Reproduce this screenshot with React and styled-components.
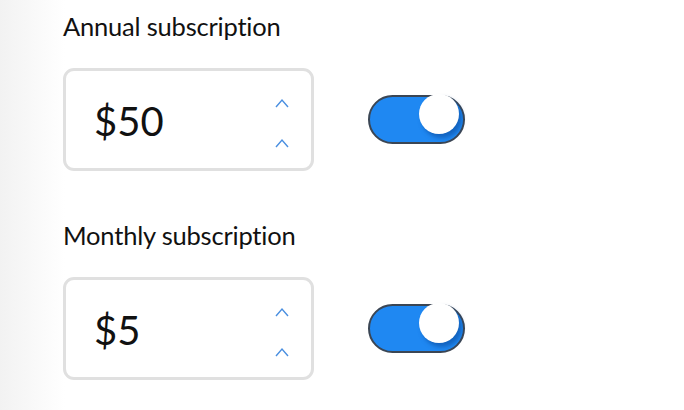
import styled, { createGlobalStyle } from 'styled-components';

const GlobalStyle = createGlobalStyle`
  html, body {
    margin: 0;
    padding: 0;
    background: #ffffff;
    font-family: Lato, "Open Sans", sans-serif;
  }
`;

const Page = styled.div`
  width: 684px;
  height: 410px;
  overflow: hidden;
  background: linear-gradient(to right, #f2f2f2 0px, #f6f6f6 20px, #fbfbfb 45px, #ffffff 65px);
  padding: 11px 0 0 63px;
  box-sizing: border-box;
  display: flex;
  flex-direction: column;
  gap: 49px;
`;

const Section = styled.div`
  display: flex;
  flex-direction: column;
  gap: 27px;
`;

const Label = styled.div`
  font-size: 25.5px;
  line-height: 30px;
  color: #111;
  letter-spacing: -0.2px;
`;

const Row = styled.div`
  display: flex;
  align-items: center;
  gap: 54px;
`;

const Field = styled.div`
  flex: none;
  width: 251px;
  height: 103px;
  box-sizing: border-box;
  border: 3px solid #e0e0e0;
  border-radius: 11px;
  background: #fff;
  display: flex;
  align-items: center;
  justify-content: space-between;
  padding: 0 22px 0 28px;
`;

const Value = styled.div`
  font-size: 40px;
  color: #111;
  padding-top: 2px;
`;

const Spinner = styled.div`
  display: flex;
  flex-direction: column;
  gap: 30px;
  padding-top: 6px;
`;

const Toggle = styled.div`
  flex: none;
  position: relative;
  width: 97px;
  height: 49px;
  box-sizing: border-box;
  border: 2px solid #3b4654;
  border-radius: 25px;
  background: #1f88f2;
`;

const Knob = styled.div`
  position: absolute;
  right: 4px;
  top: -3px;
  width: 40px;
  height: 40px;
  border-radius: 50%;
  background: #fff;
  box-shadow: 3px 4px 4px rgba(10, 70, 150, 0.55);
`;

function Chevron() {
  return (
    <svg width="14" height="10" viewBox="0 0 14 10">
      <path d="M1 9 L7 2 L13 9" fill="none" stroke="#4a8fe0" strokeWidth="1.4" />
    </svg>
  );
}

function PriceRow({ label, value }) {
  return (
    <Section>
      <Label>{label}</Label>
      <Row>
        <Field>
          <Value>{value}</Value>
          <Spinner>
            <Chevron />
            <Chevron />
          </Spinner>
        </Field>
        <Toggle>
          <Knob />
        </Toggle>
      </Row>
    </Section>
  );
}

export default function App() {
  return (
    <Page>
      <GlobalStyle />
      <PriceRow label="Annual subscription" value="$50" />
      <PriceRow label="Monthly subscription" value="$5" />
    </Page>
  );
}
